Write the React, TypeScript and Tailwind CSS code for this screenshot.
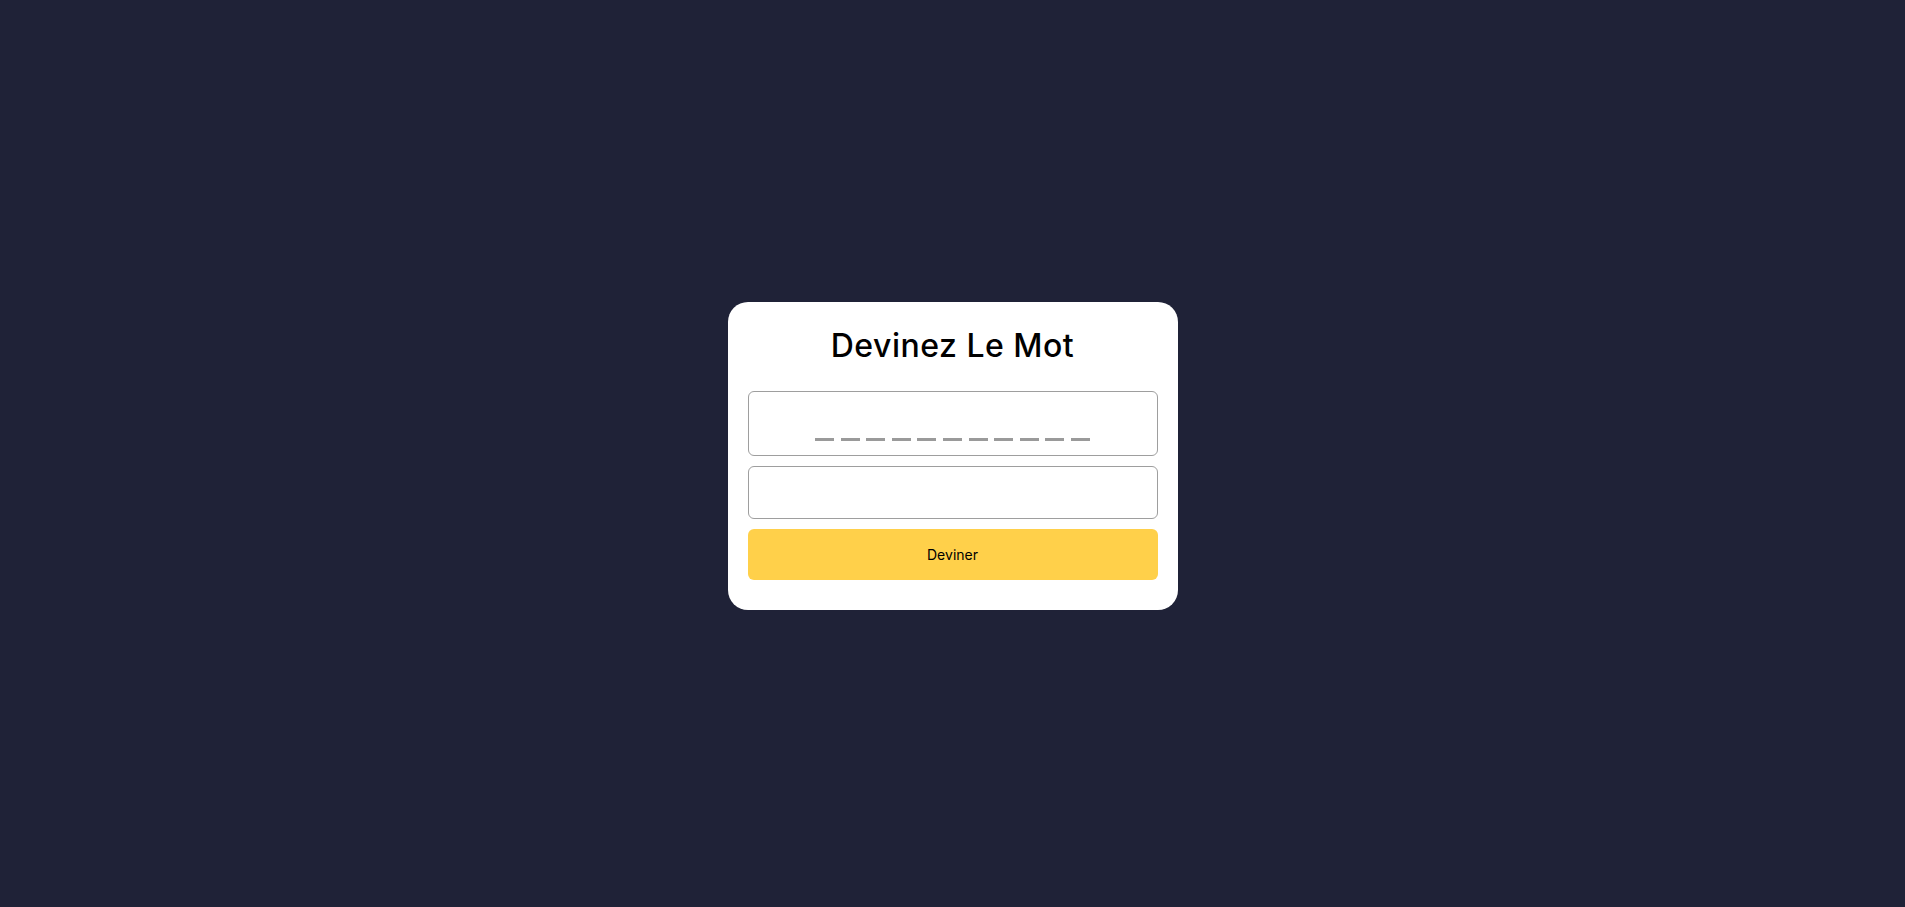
export default function App() {
  const dashes = Array.from({ length: 11 });
  return (
    <div className="min-h-screen w-full bg-[#1f2237] flex items-center justify-center pt-[5px]" style={{ fontFamily: 'Inter, "Noto Sans", sans-serif' }}>
      <div className="w-[450px] bg-white rounded-[20px] px-5 pt-5 pb-[30px] flex flex-col">
        <h1 className="text-[32px] leading-[48px] text-black text-center font-medium mb-[21px] tracking-[0.5px]">Devinez Le Mot</h1>
        <div className="h-[65px] border border-[#9e9e9e] rounded-[6px] flex items-end justify-center pb-[14px] gap-[6.6px]">
          {dashes.map((_, i) => (
            <span key={i} className="block w-[19px] h-[3px] bg-[#9a9a9a]" />
          ))}
        </div>
        <input type="text" className="mt-[10px] h-[53px] border border-[#9e9e9e] rounded-[6px] outline-none px-3" />
        <button className="mt-[10px] h-[51px] bg-[#ffd04a] rounded-[6px] text-[14px] text-black">Deviner</button>
      </div>
    </div>
  );
}
